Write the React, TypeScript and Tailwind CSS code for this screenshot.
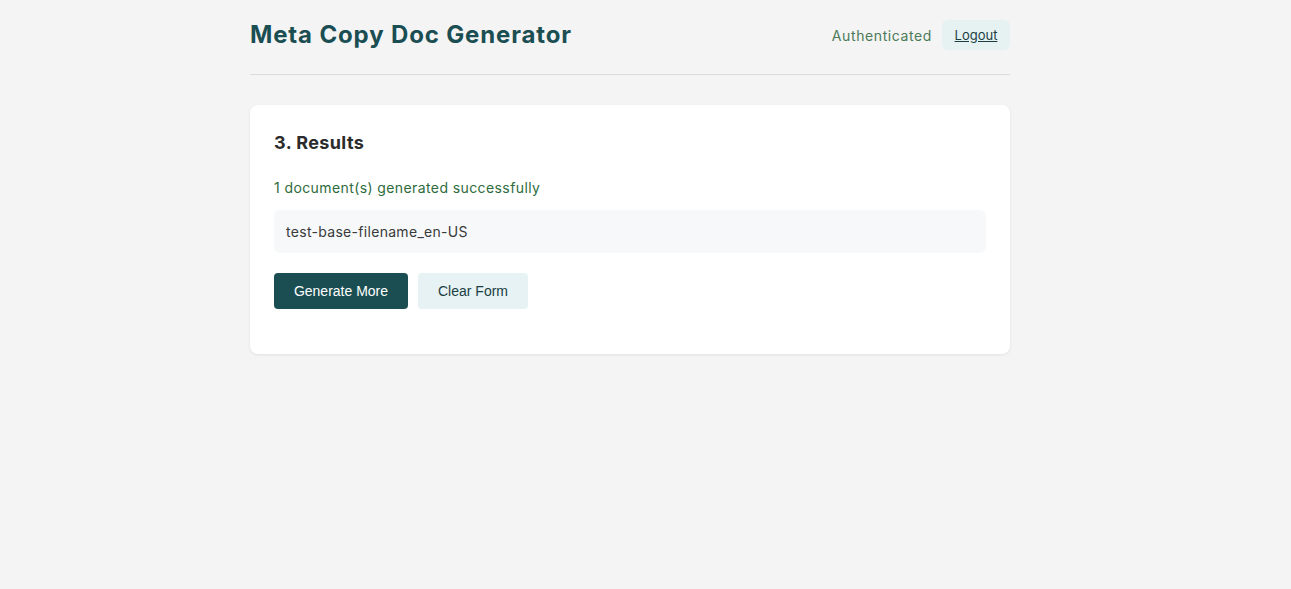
export default function App() {
  return (
    <div className="min-h-[589px] bg-[#f4f4f4] font-['Inter','Liberation_Sans',sans-serif]">
      <div className="ml-[250px] w-[760px]">
        {/* Header */}
        <header className="flex items-center justify-between h-[75px] border-b border-[#dcdcdc]">
          <h1 className="text-[24px] font-bold text-[#1b4e52] tracking-[0.85px] -mt-[4px]">Meta Copy Doc Generator</h1>
          <div className="flex items-center gap-[10px] -mt-[4px]">
            <span className="text-[14px] text-[#4b7a58] tracking-[0.6px]">Authenticated</span>
            <button className="h-[30px] w-[68px] pt-[1px] rounded-md bg-[#e6f2f2] text-[13px] text-[#1b3e42] underline">
              Logout
            </button>
          </div>
        </header>

        {/* Results card */}
        <section className="mt-[30px] bg-white rounded-lg shadow-[0_1px_3px_rgba(0,0,0,0.08)] px-[24px] pt-[27px] pb-[45px]">
          <h2 className="text-[18px] font-bold text-[#2b2b2b] leading-[22px] tracking-[0.4px]">3. Results</h2>
          <p className="mt-[24px] text-[14px] text-[#2e6b3c] leading-[20px] tracking-[0.4px]">
            1 document(s) generated successfully
          </p>
          <div className="mt-[12px] h-[43px] flex items-center px-[12px] rounded-md bg-[#f6f8f9] text-[14px] text-[#3a3a3a] tracking-[0.3px]">
            test-base-filename_en-US
          </div>
          <div className="mt-[20px] flex gap-[10px] font-['Liberation_Sans',sans-serif]">
            <button className="h-[36px] w-[134px] rounded bg-[#1b4e52] text-white text-[14px]">Generate More</button>
            <button className="h-[36px] w-[110px] rounded bg-[#e6f2f3] text-[#1b3e42] text-[14px]">Clear Form</button>
          </div>
        </section>
      </div>
    </div>
  )
}
